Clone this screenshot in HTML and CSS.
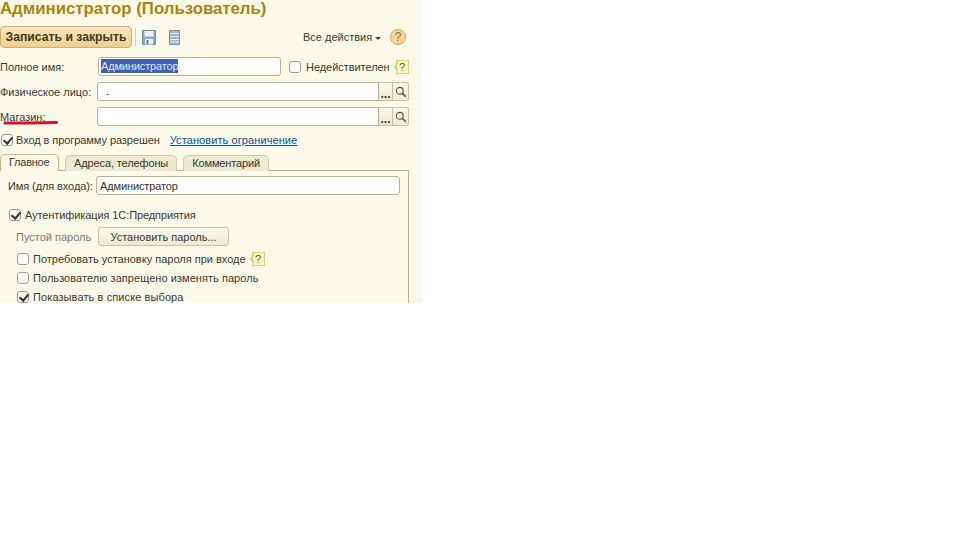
FILE: index.html
```html
<!DOCTYPE html>
<html lang="ru">
<head>
    <meta charset="UTF-8">
    <title>Администратор (Пользователь)</title>
    <link rel="stylesheet" href="styles.css">
</head>
<body>
    <div class="form">
        <h1 class="title">Администратор (Пользователь)</h1>

        <div class="toolbar">
            <button class="btn-save">Записать и закрыть</button>
            <span class="tool-sep"></span>
            <svg class="icon-disk" width="16" height="17" viewBox="0 0 16 17">
                <path d="M1.5 1.5h13v14h-13z" fill="#8fabc4" stroke="#6f8ea9"/>
                <path d="M3.5 2h9v5.5h-9z" fill="#eaf0f5"/>
                <path d="M4 10h8v5.5H4z" fill="#f0f3f6"/>
                <path d="M5.5 11h2v4h-2z" fill="#5f7f9b"/>
            </svg>
            <svg class="icon-list" width="11" height="17" viewBox="0 0 11 17">
                <path d="M.5 1.5h10v14H.5z" fill="#9db5c9" stroke="#7594ae"/>
                <path d="M1 4.5h9M1 7.5h9M1 10.5h9M1 13h9" stroke="#e4ecf2"/>
            </svg>
            <span class="all-actions">Все действия</span>
            <span class="arrow"></span>
            <span class="help-round">?</span>
        </div>

        <div class="row row-name">
            <label class="lbl">Полное имя:</label>
            <div class="input input-name"><span class="selected">Администратор</span></div>
            <span class="check check-invalid"></span>
            <span class="invalid-text">Недействителен</span>
            <span class="hint">?</span>
        </div>

        <div class="row row-ref">
            <label class="lbl">Физическое лицо:</label>
            <div class="input input-ref"><span class="dot">.</span></div>
            <span class="ref-btn ref-dots">...</span>
            <span class="ref-btn ref-find">
                <svg width="12" height="12" viewBox="0 0 12 12"><circle cx="4.8" cy="4.8" r="3.4" fill="none" stroke="#5a5530" stroke-width="1.1"/><path d="M7.4 7.4l3.4 3.4" stroke="#5a5530" stroke-width="1.6"/></svg>
            </span>
        </div>

        <div class="row row-ref">
            <label class="lbl">Магазин:</label>
            <div class="input input-ref"></div>
            <span class="ref-btn ref-dots">...</span>
            <span class="ref-btn ref-find">
                <svg width="12" height="12" viewBox="0 0 12 12"><circle cx="4.8" cy="4.8" r="3.4" fill="none" stroke="#5a5530" stroke-width="1.1"/><path d="M7.4 7.4l3.4 3.4" stroke="#5a5530" stroke-width="1.6"/></svg>
            </span>
        </div>

        <div class="row row-allow">
            <span class="check checked check-allow"></span>
            <span class="allow-text">Вход в программу разрешен</span>
            <a class="link" href="#">Установить ограничение</a>
        </div>

        <div class="tabs">
            <span class="tab tab-active">Главное</span>
            <span class="tab">Адреса, телефоны</span>
            <span class="tab">Комментарий</span>
        </div>

        <div class="panel">
            <div class="row row-login">
                <label class="lbl-login">Имя (для входа):</label>
                <div class="input input-login">Администратор</div>
            </div>
            <div class="row row-auth">
                <span class="check checked"></span>
                <span class="auth-text">Аутентификация 1С:Предприятия</span>
            </div>
            <div class="row row-pass">
                <span class="empty-pass">Пустой пароль</span>
                <button class="btn-pass">Установить пароль...</button>
            </div>
            <div class="row row-opt">
                <span class="check"></span>
                <span class="opt-text">Потребовать установку пароля при входе</span>
                <span class="hint hint-opt">?</span>
            </div>
            <div class="row row-opt">
                <span class="check"></span>
                <span class="opt-text opt-mid">Пользователю запрещено изменять пароль</span>
            </div>
            <div class="row row-opt">
                <span class="check checked"></span>
                <span class="opt-text opt-wide">Показывать в списке выбора</span>
            </div>
        </div>

        <svg class="red-mark" width="56" height="6" viewBox="0 0 56 6"><path d="M2 4C15 4.2 35 3.8 53.5 3.4" fill="none" stroke="#d3122b" stroke-width="3" stroke-linecap="round"/></svg>
    </div>
</body>
</html>
```

FILE: styles.css
```css
* {
    box-sizing: border-box;
}
body {
    margin: 0;
    background: #fff;
    font-family: "Liberation Sans", Arial, sans-serif;
    font-size: 11px;
    color: #3b3a2c;
}
.form {
    position: relative;
    width: 422px;
    height: 303px;
    overflow: hidden;
    background: #fbf9ea;
}
.title {
    margin: 0;
    height: 26px;
    font-size: 16.8px;
    line-height: 17px;
    font-weight: bold;
    color: #a9850d;
}
.toolbar {
    display: flex;
    align-items: center;
    height: 22px;
}
.btn-save {
    width: 132px;
    height: 22px;
    margin: 0;
    padding: 0;
    border: 1px solid #cdb06e;
    border-radius: 4px;
    background: linear-gradient(#f9e7bd, #ecce92);
    font-family: inherit;
    font-size: 12.2px;
    font-weight: bold;
    color: #443c1c;
}
.tool-sep {
    width: 1px;
    height: 18px;
    margin: 0 5px 0 3px;
    background: #d8d2b0;
}
.icon-list {
    margin-left: 12px;
}
.all-actions {
    margin-left: 123px;
}
.arrow {
    width: 0;
    height: 0;
    margin: 2px 0 0 3px;
    border: 3px solid transparent;
    border-top: 3px solid #3b3a2c;
    border-bottom: 0;
}
.help-round {
    width: 16px;
    height: 16px;
    margin-left: 9px;
    border: 1px solid #d3a35a;
    border-radius: 50%;
    background: #f5d59b;
    text-align: center;
    line-height: 14px;
    font-size: 12px;
    color: #8a6a2a;
}
.row {
    display: flex;
    align-items: center;
}
.row-name {
    height: 19px;
    margin-top: 9px;
}
.row-ref {
    height: 19px;
    margin-top: 6px;
}
.lbl {
    width: 97px;
    flex: none;
}
.input {
    height: 19px;
    border: 1px solid #b9b48c;
    border-radius: 3px;
    background: #fff;
    line-height: 17px;
    padding-left: 3px;
}
.input-name {
    width: 183px;
    margin-left: 1px;
    padding-left: 2px;
}
.selected {
    display: inline-block;
    height: 14px;
    line-height: 14px;
    letter-spacing: -0.15px;
    background: #3f60b0;
    color: #dfe6f5;
}
.dot {
    padding-left: 5px;
    color: #000;
}
.check {
    flex: none;
    position: relative;
    display: inline-block;
    width: 12px;
    height: 12px;
    border: 1px solid #a09d88;
    border-radius: 3px;
    background: #fff;
}
.checked::after {
    content: "";
    position: absolute;
    left: 3px;
    top: 0;
    width: 4px;
    height: 7px;
    border: solid #33312a;
    border-width: 0 2px 2px 0;
    transform: rotate(40deg);
}
.check-invalid {
    margin-left: 8px;
}
.invalid-text {
    margin-left: 5px;
    letter-spacing: -0.05px;
}
.hint {
    flex: none;
    position: relative;
    width: 13px;
    height: 14px;
    margin-left: 6px;
    border: 1px solid #d5cf80;
    background: #fdf8c4;
    text-align: center;
    line-height: 12px;
    font-size: 11px;
    color: #5f5a20;
}
.hint::before {
    content: "";
    position: absolute;
    left: -5px;
    top: 3px;
    width: 5px;
    height: 5px;
    border: solid #d5cf80;
    border-width: 0 0 1px 1px;
    transform: rotate(45deg) translate(2px, -2px);
}
.input-ref {
    width: 282px;
    border-radius: 3px 0 0 3px;
}
.ref-btn {
    display: flex;
    align-items: center;
    justify-content: center;
    height: 19px;
    border: 1px solid #c8c39d;
    border-left: 0;
    background: linear-gradient(#fbf9ef, #ece8d2);
}
.ref-dots {
    width: 14px;
    padding-top: 4px;
    font-size: 12px;
    font-weight: bold;
    color: #3b3a2c;
}
.ref-find {
    width: 16px;
    border-radius: 0 3px 3px 0;
}
.row-allow {
    height: 14px;
    margin-top: 7px;
}
.check-allow {
    margin-left: 1px;
}
.allow-text {
    margin-left: 3px;
    letter-spacing: -0.07px;
}
.link {
    margin-left: 10px;
    color: #0a50a0;
    text-decoration: underline;
    letter-spacing: 0.09px;
}
.tabs {
    display: flex;
    height: 17px;
    margin-top: 7px;
    position: relative;
    z-index: 1;
}
.tab {
    height: 16px;
    margin: 1px 6px 0 0;
    padding: 0 8px;
    border: 1px solid #cfcbab;
    border-bottom: 0;
    border-radius: 5px 5px 0 0;
    background: #ece9d3;
    line-height: 14px;
    letter-spacing: -0.12px;
}
.tab-active {
    width: 59px;
    height: 17px;
    margin-top: 0;
    border-color: #cbb377;
    border-top-color: #e2b95d;
    background: #fbf9ea;
    line-height: 15px;
    letter-spacing: -0.25px;
}
.panel {
    width: 409px;
    height: 140px;
    margin-top: -1px;
    padding: 5px 0 0 8px;
    border: 1px solid #b4b08e;
    border-left: 0;
}
.lbl-login {
    width: 88px;
    flex: none;
    letter-spacing: -0.1px;
}
.input-login {
    width: 304px;
    color: #35342a;
    letter-spacing: -0.12px;
    line-height: 18px;
}
.row-auth {
    margin-top: 13px;
    height: 13px;
    padding-left: 1px;
}
.auth-text {
    margin-left: 4px;
    letter-spacing: -0.1px;
}
.row-pass {
    margin-top: 6px;
    height: 19px;
    padding-left: 8px;
}
.empty-pass {
    width: 82px;
    color: #7f7d6c;
}
.btn-pass {
    width: 131px;
    height: 19px;
    margin: 0;
    padding: 0;
    border: 1px solid #c8c39d;
    border-radius: 3px;
    background: linear-gradient(#fbf9ef, #ece8d2);
    font-family: inherit;
    font-size: 11px;
    color: #3b3a2c;
}
.row-opt {
    height: 13px;
    margin: 6px 0 0 9px;
}
.opt-text {
    margin-left: 4px;
}
.opt-mid {
    letter-spacing: 0.05px;
}
.opt-wide {
    letter-spacing: 0.1px;
}
.hint-opt {
    margin-left: 6px;
}
.red-mark {
    position: absolute;
    left: 3px;
    top: 119px;
}
```
